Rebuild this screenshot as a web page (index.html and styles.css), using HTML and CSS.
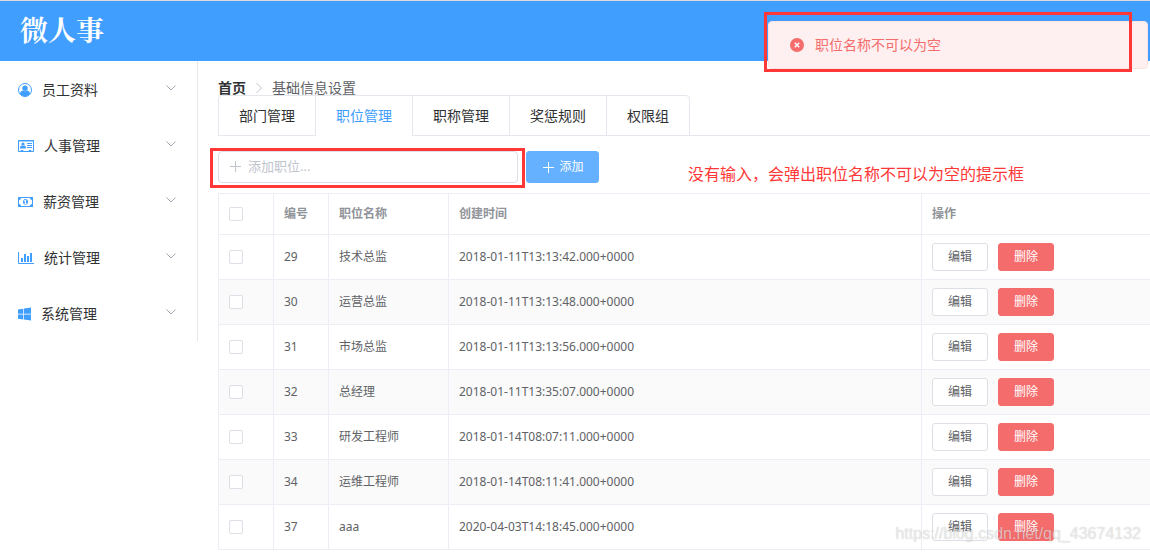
FILE: index.html
```html
<!DOCTYPE html>
<html lang="zh-CN">
<head>
<meta charset="utf-8">
<title>微人事</title>
<link rel="stylesheet" href="styles.css">
</head>
<body>
<svg class="sprite" aria-hidden="true">
  <symbol id="chevron" viewBox="0 0 12 12"><path d="M1.5 3.5 6 8l4.500-4.500" fill="none" stroke="currentColor"/></symbol>
  <symbol id="plus" viewBox="0 0 14 14"><path d="M7.500 2v11M2 7.500h11" fill="none" stroke="currentColor"/></symbol>
</svg>
<header class="header"><h1 class="logo">微人事</h1></header>
<div class="layout">
  <nav class="aside">
    <button class="menu-item" type="button">
      <svg class="menu-icon" width="14" height="14" viewBox="0 0 14 14"><circle cx="7" cy="7" r="6.500" fill="none" stroke="currentColor"/><circle cx="7" cy="5.300" r="2.700" fill="currentColor"/><path d="M1.800 10.800C2.500 8.700 3.700 7.700 5 7.600c1.200.9 2.800.9 4 0 1.300.1 2.500 1.100 3.200 3.200A6.500 6.500 0 0 1 1.800 10.800z" fill="currentColor"/></svg>
      <span class="menu-text">员工资料</span><svg class="arrow"><use href="#chevron"/></svg>
    </button>
    <button class="menu-item" type="button">
      <svg class="menu-icon" width="16" height="14" viewBox="0 0 16 14"><path d="M.5 1.500h15v11H.5zM0 2h16M3 12.500v-1h2v1M11 12.500v-1h2v1" fill="none" stroke="currentColor"/><circle cx="5" cy="5" r="1.600" fill="currentColor"/><path d="M2 9.500c0-2 .7-2.800 1.600-3 .9.600 1.900.6 2.800 0 .9.200 1.600 1 1.600 3z" fill="currentColor"/><path d="M9 4.500h5M9 6.500h5M9 8.500h5" stroke="currentColor"/></svg>
      <span class="menu-text">人事管理</span><svg class="arrow"><use href="#chevron"/></svg>
    </button>
    <button class="menu-item" type="button">
      <svg class="menu-icon" width="15" height="14" viewBox="0 0 15 14"><path fill="currentColor" fill-rule="evenodd" d="M0 2h15v10H0zM3 3a2 2 0 0 1-2 2v4a2 2 0 0 1 2 2h9a2 2 0 0 1 2-2V5a2 2 0 0 1-2-2z"/><path fill="currentColor" fill-rule="evenodd" d="M7.500 4C9 4 10 5.400 10 7S9 10 7.500 10 5 8.600 5 7s1-3 2.500-3zM7 5l-1 .8v.6h1v2H6v.8h3v-.8H8V5z"/></svg>
      <span class="menu-text">薪资管理</span><svg class="arrow"><use href="#chevron"/></svg>
    </button>
    <button class="menu-item" type="button">
      <svg class="menu-icon" width="16" height="14" viewBox="0 0 16 14"><path d="M.5 1v11.500H16" fill="none" stroke="currentColor"/><path d="M3 7h2v4H3zM6 3h2v8H6zM9 5h2v6H9zM12 2h2v9h-2z" fill="currentColor"/></svg>
      <span class="menu-text">统计管理</span><svg class="arrow"><use href="#chevron"/></svg>
    </button>
    <button class="menu-item" type="button">
      <svg class="menu-icon" width="13" height="14" viewBox="0 0 13 14"><path d="M0 2.400 5.300 1.700v5H0zM6 1.600 13 .6v6.100H6zM0 7.400h5.300v5L0 11.700zM6 7.400h7v6.100l-7-1z" fill="currentColor"/></svg>
      <span class="menu-text">系统管理</span><svg class="arrow"><use href="#chevron"/></svg>
    </button>
  </nav>
  <main class="main">
    <nav class="breadcrumb"><a class="home" href="#">首页</a><svg class="separator" viewBox="0 0 14 14"><path d="m4.500 2 5 5-5 5" fill="none" stroke="currentColor"/></svg><span>基础信息设置</span></nav>
    <div class="tabs">
      <div class="tab-list" role="tablist">
        <button class="tab" type="button" role="tab">部门管理</button>
        <button class="tab active" type="button" role="tab" aria-selected="true">职位管理</button>
        <button class="tab" type="button" role="tab">职称管理</button>
        <button class="tab" type="button" role="tab">奖惩规则</button>
        <button class="tab" type="button" role="tab">权限组</button>
      </div>
    </div>
    <div class="toolbar">
      <div class="field">
        <svg class="field-icon"><use href="#plus"/></svg>
        <input class="input" type="text" placeholder="添加职位..." aria-label="添加职位">
        <div class="mark field-mark"></div>
      </div>
      <button class="button add" type="button"><svg class="add-icon"><use href="#plus"/></svg>添加</button>
      <p class="note">没有输入，会弹出职位名称不可以为空的提示框</p>
    </div>
    <table class="table">
      <colgroup><col class="col-check"><col class="col-id"><col class="col-name"><col class="col-time"><col></colgroup>
      <thead><tr><th><input class="check" type="checkbox" aria-label="全选"></th><th>编号</th><th>职位名称</th><th>创建时间</th><th>操作</th></tr></thead>
      <tbody>
        <tr><td><input class="check" type="checkbox" aria-label="选择 29"></td><td>29</td><td>技术总监</td><td>2018-01-11T13:13:42.000+0000</td><td><div class="actions"><button class="button" type="button">编辑</button><button class="button danger" type="button">删除</button></div></td></tr>
        <tr><td><input class="check" type="checkbox" aria-label="选择 30"></td><td>30</td><td>运营总监</td><td>2018-01-11T13:13:48.000+0000</td><td><div class="actions"><button class="button" type="button">编辑</button><button class="button danger" type="button">删除</button></div></td></tr>
        <tr><td><input class="check" type="checkbox" aria-label="选择 31"></td><td>31</td><td>市场总监</td><td>2018-01-11T13:13:56.000+0000</td><td><div class="actions"><button class="button" type="button">编辑</button><button class="button danger" type="button">删除</button></div></td></tr>
        <tr><td><input class="check" type="checkbox" aria-label="选择 32"></td><td>32</td><td>总经理</td><td>2018-01-11T13:35:07.000+0000</td><td><div class="actions"><button class="button" type="button">编辑</button><button class="button danger" type="button">删除</button></div></td></tr>
        <tr><td><input class="check" type="checkbox" aria-label="选择 33"></td><td>33</td><td>研发工程师</td><td>2018-01-14T08:07:11.000+0000</td><td><div class="actions"><button class="button" type="button">编辑</button><button class="button danger" type="button">删除</button></div></td></tr>
        <tr><td><input class="check" type="checkbox" aria-label="选择 34"></td><td>34</td><td>运维工程师</td><td>2018-01-14T08:11:41.000+0000</td><td><div class="actions"><button class="button" type="button">编辑</button><button class="button danger" type="button">删除</button></div></td></tr>
        <tr><td><input class="check" type="checkbox" aria-label="选择 37"></td><td>37</td><td>aaa</td><td>2020-04-03T14:18:45.000+0000</td><td><div class="actions"><button class="button" type="button">编辑</button><button class="button danger" type="button">删除</button></div></td></tr>
      </tbody>
    </table>
  </main>
</div>
<div class="message" role="alert">
  <svg class="message-icon" viewBox="0 0 14 14"><circle cx="7" cy="7" r="7" fill="currentColor"/><path d="m4.800 4.800 4.400 4.400M9.200 4.800 4.800 9.200" stroke="#fff" stroke-width="1.400"/></svg>
  <span>职位名称不可以为空</span>
  <div class="mark message-mark"></div>
</div>
<div class="watermark">https://blog.csdn.net/qq_43674132</div>
</body>
</html>
```
FILE: styles.css
```css
* { box-sizing: border-box; }

body {
  margin: 0;
  color: #303133;
  background: #fff;
  font: 14px/20px "Noto Sans", "Noto Sans CJK SC", sans-serif;
}

button, input { font: inherit; margin: 0; }
.sprite { position: absolute; width: 0; height: 0; }

.header {
  display: flex;
  align-items: center;
  height: 61px;
  padding: 0 20px;
  border-top: 1px solid #dcdcdc;
  background: #409eff;
}
.logo {
  margin: 0;
  padding-bottom: 4px;
  color: #fff;
  font: 700 28px/40px "Noto Serif CJK SC", "Noto Sans CJK SC", sans-serif;
}

.layout { display: flex; align-items: flex-start; }
.aside { flex: none; width: 198px; border-right: 1px solid #e6e6e6; }
.menu-item {
  display: flex;
  align-items: center;
  gap: 10px;
  width: 100%;
  height: 56px;
  padding: 2px 20px 0 18px;
  border: 0;
  background: none;
  color: #303133;
  text-align: left;
}
.menu-icon { flex: none; color: #409eff; }
.menu-text { flex: 1; }
.arrow { width: 12px; height: 12px; margin-bottom: 4px; color: #a0a8b4; }

.main { flex: 1; min-width: 0; padding: 20px 0 0 20px; }
.breadcrumb { display: flex; align-items: center; height: 14px; color: #606266; }
.home { color: #303133; font-weight: 700; text-decoration: none; }
.separator { width: 14px; height: 14px; margin: 0 6px; color: #c0c4cc; }

.tabs { display: flex; border-bottom: 1px solid #e4e7ed; }
.tab-list {
  display: flex;
  margin-bottom: -1px;
  border: 1px solid #e4e7ed;
  border-radius: 4px 4px 0 0;
}
.tab {
  height: 39px;
  padding: 0 20px;
  border: 0;
  border-left: 1px solid #e4e7ed;
  background: none;
  color: #303133;
}
.tab:first-child { border-left: 0; }
.tab.active { height: 40px; margin-bottom: -1px; background: #fff; color: #409eff; }

.toolbar { display: flex; gap: 8px; margin: 15px 0 10px; }
.field { position: relative; width: 300px; }
.field-icon { position: absolute; top: 8px; left: 10px; width: 14px; height: 14px; color: #c0c4cc; }
.input {
  display: block;
  width: 100%;
  height: 32px;
  padding: 0 15px 2px 29px;
  border: 1px solid #dcdfe6;
  border-radius: 4px;
  background: #fff;
  color: #606266;
  font-size: 13px;
}
.input::placeholder { color: #c0c4cc; opacity: 1; }
.mark { position: absolute; border: 3px solid #ff3737; pointer-events: none; }
.field-mark { inset: -3px -7px -5px -8px; }
.note { margin: 14px 0 0 81px; color: #ff3737; font-size: 16px; line-height: 18px; }

.button {
  display: flex;
  align-items: center;
  justify-content: center;
  width: 56px;
  height: 28px;
  padding: 0;
  border: 1px solid #dcdfe6;
  border-radius: 3px;
  background: #fff;
  color: #606266;
  font-size: 12px;
  line-height: 16px;
}
.button.danger { border-color: #f56c6c; background: #f56c6c; color: #fff; }
.button.add {
  gap: 4px;
  width: 73px;
  height: 32px;
  border-color: #66b1ff;
  background: #66b1ff;
  color: #fff;
}
.add-icon { width: 14px; height: 14px; }

.table {
  width: 100%;
  border-collapse: separate;
  border-spacing: 0;
  table-layout: fixed;
  border-top: 1px solid #ebeef5;
  border-left: 1px solid #ebeef5;
  color: #606266;
  font-size: 12px;
}
.col-check, .col-id { width: 55px; }
.col-name { width: 120px; }
.col-time { width: 473px; }
.table th, .table td {
  height: 45px;
  padding: 0 10px;
  border-right: 1px solid #ebeef5;
  border-bottom: 1px solid #ebeef5;
  text-align: left;
}
.table th { height: 41px; color: #909399; }
.table th:last-child, .table td:last-child { border-right: 0; }
.table tbody tr:nth-child(even) { background: #fafafa; }
.check {
  display: block;
  appearance: none;
  width: 14px;
  height: 14px;
  border: 1px solid #dcdfe6;
  border-radius: 2px;
  background: #fff;
}
.actions { display: flex; gap: 10px; }

.message {
  position: absolute;
  top: 21px;
  right: 2px;
  display: flex;
  align-items: center;
  gap: 11px;
  width: 380px;
  height: 48px;
  padding: 0 21px;
  border: 1px solid #fde2e2;
  border-radius: 4px;
  background: #fef0f0;
  color: #f56c6c;
}
.message-icon { width: 14px; height: 14px; }
.message-mark { inset: -10px 15px -4px -5px; }

.watermark {
  position: absolute;
  top: 524px;
  right: 9px;
  color: rgba(255, 255, 255, .6);
  font: 16px/20px "Liberation Sans", sans-serif;
  text-shadow: 0 0 1px rgba(0, 0, 0, .25);
}
```
